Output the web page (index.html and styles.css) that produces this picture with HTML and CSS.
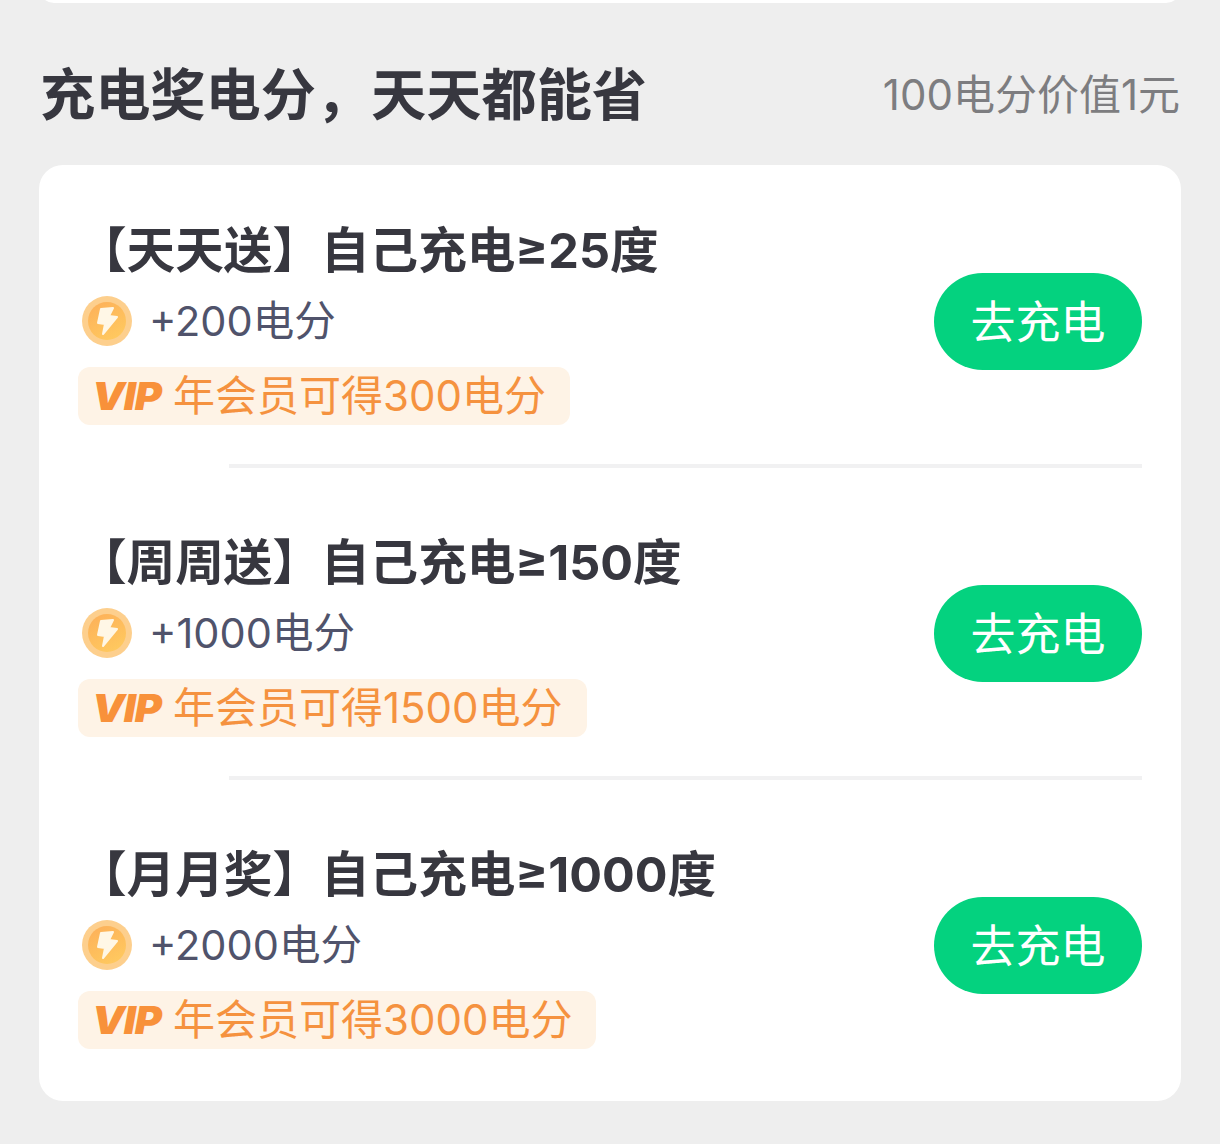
FILE: index.html
```html
<!DOCTYPE html>
<html lang="zh-CN">
<head>
<meta charset="utf-8">
<title>充电奖电分</title>
<link rel="stylesheet" href="styles.css">
</head>
<body>
<svg class="defs" width="0" height="0" aria-hidden="true">
  <defs>
    <linearGradient id="coin-face" x1="0.2" y1="0.1" x2="0.7" y2="1">
      <stop offset="0" stop-color="#fdb35a"/>
      <stop offset="1" stop-color="#ffc95f"/>
    </linearGradient>
    <symbol id="coin" viewBox="0 0 50 50">
      <circle cx="25" cy="25" r="25" fill="#fdcf8d"/>
      <circle cx="25" cy="25" r="19" fill="url(#coin-face)"/>
      <path d="M19 13 L31 12 L27 20 L35 21 L21 38 L23 28 L16 27 Z" fill="#fff7e6" stroke="#fff7e6" stroke-width="2" stroke-linejoin="round"/>
    </symbol>
  </defs>
</svg>
<div class="page">
  <div class="prev-card"></div>
  <header class="head">
    <h2 class="head-title">充电奖电分，天天都能省</h2>
    <span class="head-note">100电分价值1元</span>
  </header>
  <section class="card">
    <article class="task task-first">
      <div class="task-info">
        <h3 class="task-title">【天天送】自己充电≥25度</h3>
        <div class="reward">
          <svg class="coin"><use href="#coin"/></svg>
          <span class="reward-text">+200电分</span>
        </div>
        <div class="vip"><span class="vip-logo">VIP</span><span class="vip-text">年会员可得300电分</span></div>
      </div>
      <a class="go">去充电</a>
    </article>
    <article class="task">
      <div class="task-info">
        <h3 class="task-title">【周周送】自己充电≥150度</h3>
        <div class="reward">
          <svg class="coin"><use href="#coin"/></svg>
          <span class="reward-text">+1000电分</span>
        </div>
        <div class="vip"><span class="vip-logo">VIP</span><span class="vip-text">年会员可得1500电分</span></div>
      </div>
      <a class="go">去充电</a>
    </article>
    <article class="task task-last">
      <div class="task-info">
        <h3 class="task-title">【月月奖】自己充电≥1000度</h3>
        <div class="reward">
          <svg class="coin"><use href="#coin"/></svg>
          <span class="reward-text">+2000电分</span>
        </div>
        <div class="vip"><span class="vip-logo">VIP</span><span class="vip-text">年会员可得3000电分</span></div>
      </div>
      <a class="go">去充电</a>
    </article>
  </section>
</div>
</body>
</html>
```
FILE: styles.css
```css
* { box-sizing: border-box; }
html, body { margin: 0; padding: 0; }
body {
  background: #eeeeee;
  font-family: "Inter", "Noto Sans CJK SC", "Noto Sans", sans-serif;
}
.defs { position: absolute; }
.page {
  width: 1220px;
  height: 1144px;
  overflow: hidden;
  padding: 0 39px;
}
.prev-card {
  height: 30px;
  margin-top: -27px;
  background: #fff;
  border-radius: 24px;
}
.head {
  height: 162px;
  padding: 22px 1px 0 1px;
  display: flex;
  justify-content: space-between;
  align-items: center;
}
.head-title {
  margin: 0;
  font-size: 55.2px;
  line-height: 70px;
  font-weight: 700;
  color: #37373f;
}
.head-note {
  font-size: 42px;
  line-height: 56px;
  color: #7d7d80;
}
.card {
  background: #fff;
  border-radius: 24px;
  height: 936px;
  padding: 0 39px;
}
.task {
  position: relative;
  display: flex;
  justify-content: space-between;
  align-items: flex-start;
  height: 312px;
  padding-top: 68px;
  border-bottom: 3px solid transparent;
}
.task-first { height: 303px; padding-top: 59px; }
.task::after {
  content: "";
  position: absolute;
  left: 151px;
  right: 0;
  bottom: -3px;
  height: 4px;
  background: #f1f1f2;
}
.task-last::after { display: none; }
.task-title {
  margin: 0;
  height: 52px;
  font-size: 48.6px;
  line-height: 54px;
  font-weight: 700;
  color: #37373f;
  white-space: nowrap;
}
.reward {
  display: flex;
  align-items: center;
  height: 46px;
  margin-top: 22px;
  padding-left: 4px;
}
.coin { width: 50px; height: 50px; flex: none; }
.reward-text {
  margin-left: 17px;
  font-size: 41.5px;
  line-height: 42px;
  color: #50536b;
}
.vip {
  display: inline-flex;
  align-items: center;
  height: 58px;
  margin-top: 23px;
  padding: 0 24px 0 16px;
  background: #fef3e6;
  border-radius: 12px;
}
.vip-logo {
  display: inline-block;
  width: 80px;
  margin-left: -2px;
  margin-right: 1px;
  font-size: 38px;
  line-height: 58px;
  font-weight: 900;
  font-style: italic;
  letter-spacing: -1px;
  color: #f8913a;
  transform: scaleX(1.09);
  transform-origin: left center;
}
.vip-text {
  font-size: 42px;
  line-height: 58px;
  height: 58px;
  color: #f5923f;
  white-space: nowrap;
}
.go {
  display: flex;
  align-items: center;
  justify-content: center;
  width: 208px;
  height: 97px;
  margin-top: 49px;
  padding-bottom: 4px;
  border-radius: 49px;
  background: #04d27f;
  color: #fff;
  font-size: 45px;
}
```
